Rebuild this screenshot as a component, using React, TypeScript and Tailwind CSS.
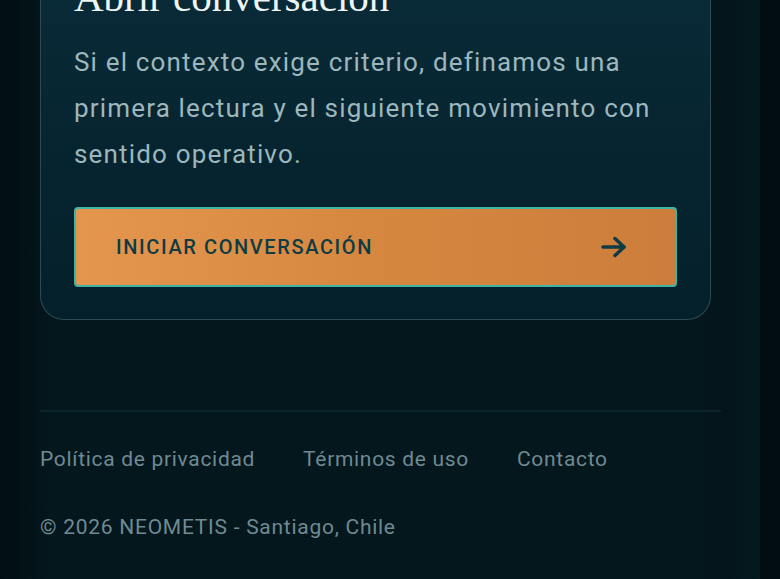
import React from "react";

const sans = "font-['Roboto','Noto_Sans',sans-serif]";

export default function App() {
  return (
    <div className="h-[579px] w-full overflow-hidden flex bg-[#020d11]">
      <div className={`w-[760px] shrink-0 h-full bg-[linear-gradient(90deg,#020e12_0px,#04171d_50px,#04171d_690px,#03151a_728px,#041a20_760px)] px-10 ${sans}`}>
        <div className="w-[671px] -mt-[60px] rounded-b-[24px] border border-t-0 border-[#2c4b53] bg-[linear-gradient(180deg,#0a2c39_0%,#062430_60%,#04202a_100%)] px-[33px] pt-[33px] pb-[32px]">
          <h2 className="font-['Liberation_Serif','DejaVu_Serif',serif] text-[41px] leading-[48px] text-[#eef5f5] font-normal">
            Abrir conversación
          </h2>
          <p className="mt-[18px] text-[26px] leading-[46px] text-[#9db7bc] tracking-[0.045em]">
            Si el contexto exige criterio, definamos una primera lectura y el siguiente movimiento con sentido operativo.
          </p>
          <button className="mt-[30px] w-full h-[80px] flex items-center justify-between rounded-[4px] border-2 border-[#3fb4a6] bg-[linear-gradient(90deg,#e4964f_0%,#d6873f_50%,#cc7d3b_100%)] pl-[40px] pr-[48px]">
            <span className="text-[20px] tracking-[0.08em] text-[#0f3b44] font-medium">INICIAR CONVERSACIÓN</span>
            <svg width="26" height="22" viewBox="0 0 26 22" fill="none" stroke="#0f3b44" strokeWidth="3.5" strokeLinecap="round" strokeLinejoin="round">
              <path d="M2 11H23" />
              <path d="M14 2.5L23 11L14 19.5" />
            </svg>
          </button>
        </div>
        <div className="mt-[90px] h-[2px] w-[681px] bg-[#0a262c]" />
        <div className="pt-[33px] flex gap-[48px] text-[21px] leading-[28px] text-[#6f8a93] tracking-[0.033em]">
          <a>Política de privacidad</a>
          <a>Términos de uso</a>
          <a>Contacto</a>
        </div>
        <div className="mt-[40px] text-[21px] leading-[28px] text-[#6f8a93] tracking-[0.035em]">
          © 2026 NEOMETIS - Santiago, Chile
        </div>
      </div>
      <div className="flex-1 h-full bg-[#020d11]" />
    </div>
  );
}
